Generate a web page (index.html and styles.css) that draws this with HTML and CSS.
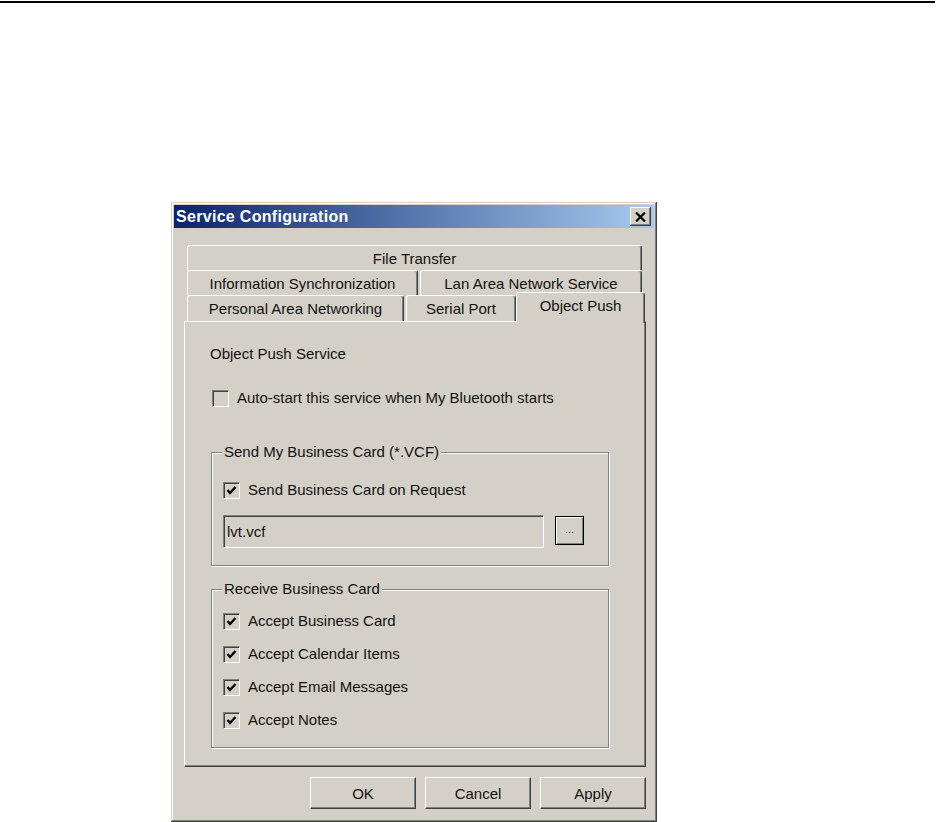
FILE: index.html
```html
<!DOCTYPE html>
<html lang="en">
<head>
  <meta charset="UTF-8" />
  <meta name="viewport" content="width=device-width, initial-scale=1" />
  <title>Service Configuration</title>
  <link rel="stylesheet" href="styles.css">
</head>
<body>
  <div class="topline"></div>

  <div class="dialog">
    <div class="titlebar">
      <span class="title">Service Configuration</span>
      <button class="close-btn" aria-label="Close">
        <svg width="11" height="10" viewBox="0 0 11 10"><path d="M1 0.5 L10 9.5 M10 0.5 L1 9.5" stroke="#000" stroke-width="2.2" fill="none"/></svg>
      </button>
    </div>

    <div class="tabs">
      <div class="tab-row">
        <div class="tab tab-ft">File Transfer</div>
      </div>
      <div class="tab-row">
        <div class="tab tab-is">Information Synchronization</div>
        <div class="tab tab-lan">Lan Area Network Service</div>
      </div>
      <div class="tab-row">
        <div class="tab tab-pan">Personal Area Networking</div>
        <div class="tab tab-sp">Serial Port</div>
        <div class="tab tab-op active">Object Push</div>
      </div>
    </div>

    <div class="panel">
      <p class="caption">Object Push Service</p>

      <div class="check top-check">
        <span class="box"></span>
        <span>Auto-start this service when My Bluetooth starts</span>
      </div>

      <fieldset class="group group-send">
        <legend>Send My Business Card (*.VCF)</legend>
        <div class="check">
          <span class="box"><svg width="15" height="15" viewBox="0 0 15 15"><path d="M3.5 7 L6 10 L11.5 4" stroke="#000" stroke-width="2.4" fill="none"/></svg></span>
          <span>Send Business Card on Request</span>
        </div>
        <div class="file-row">
          <div class="edit">lvt.vcf</div>
          <button class="browse">...</button>
        </div>
      </fieldset>

      <fieldset class="group group-recv">
        <legend>Receive Business Card</legend>
        <div class="check">
          <span class="box"><svg width="15" height="15" viewBox="0 0 15 15"><path d="M3.5 7 L6 10 L11.5 4" stroke="#000" stroke-width="2.4" fill="none"/></svg></span>
          <span>Accept Business Card</span>
        </div>
        <div class="check">
          <span class="box"><svg width="15" height="15" viewBox="0 0 15 15"><path d="M3.5 7 L6 10 L11.5 4" stroke="#000" stroke-width="2.4" fill="none"/></svg></span>
          <span>Accept Calendar Items</span>
        </div>
        <div class="check">
          <span class="box"><svg width="15" height="15" viewBox="0 0 15 15"><path d="M3.5 7 L6 10 L11.5 4" stroke="#000" stroke-width="2.4" fill="none"/></svg></span>
          <span>Accept Email Messages</span>
        </div>
        <div class="check">
          <span class="box"><svg width="15" height="15" viewBox="0 0 15 15"><path d="M3.5 7 L6 10 L11.5 4" stroke="#000" stroke-width="2.4" fill="none"/></svg></span>
          <span>Accept Notes</span>
        </div>
      </fieldset>
    </div>

    <div class="buttons">
      <button class="btn">OK</button>
      <button class="btn">Cancel</button>
      <button class="btn">Apply</button>
    </div>
  </div>
</body>
</html>
```

FILE: styles.css
```css
    body {
      margin: 0;
      background: #fff;
      font-family: "Liberation Sans", Arial, sans-serif;
      font-size: 15px;
      color: #111;
      overflow: hidden;
      height: 822px;
    }
    .topline {
      height: 2px;
      width: 935px;
      margin-top: 1px;
      background: #000;
    }
    .dialog {
      margin: 199px 0 0 171px;
      width: 486px;
      height: 620px;
      box-sizing: border-box;
      padding: 3px;
      background: #d4d0c8;
      box-shadow: inset -1px -1px #404040, inset 1px 1px #d4d0c8,
                  inset -2px -2px #808080, inset 2px 2px #fff;
    }
    .titlebar {
      height: 23px;
      display: flex;
      align-items: flex-start;
      justify-content: space-between;
      background: linear-gradient(to right, #0a246a, #a6caf0);
    }
    .title {
      color: #fff;
      font-weight: bold;
      font-size: 16px;
      letter-spacing: 0.3px;
      line-height: 23px;
      padding-left: 2px;
    }
    .close-btn {
      width: 21px;
      height: 19px;
      margin: 2px 3px 0 0;
      padding: 0;
      border: none;
      background: #d4d0c8;
      display: flex;
      align-items: center;
      justify-content: center;
      box-shadow: inset -1px -1px #404040, inset 1px 1px #fff,
                  inset -2px -2px #808080;
    }

    /* tabs */
    .tabs {
      margin: 17px 0 0 13px;
    }
    .tab-row {
      display: flex;
      align-items: flex-end;
      gap: 2px;
    }
    .tab {
      height: 25px;
      box-sizing: border-box;
      padding-top: 1px;
      line-height: 23px;
      text-align: center;
      white-space: nowrap;
      background: #d4d0c8;
      border-top: 1px solid #fff;
      border-left: 1px solid #fff;
      border-right: 1px solid #404040;
      border-radius: 3px 3px 0 0;
      box-shadow: inset -1px 0 #808080;
    }
    .tab-ft { width: 455px; }
    .tab-is { width: 231px; }
    .tab-lan { width: 222px; }
    .tab-pan { width: 217px; height: 26px; }
    .tab-sp { width: 110px; height: 26px; }
    .tab.active {
      width: 129px;
      height: 31px;
      margin: -3px 0 -2px -2px;
      position: relative;
      z-index: 2;
      line-height: 24px;
    }

    .panel {
      margin-left: 10px;
      width: 462px;
      height: 446px;
      box-sizing: border-box;
      padding: 23px 0 0 25px;
      border-top: 1px solid #fff;
      border-left: 1px solid #fff;
      border-right: 1px solid #404040;
      border-bottom: 1px solid #404040;
      box-shadow: inset -1px -1px #808080;
    }
    .caption {
      margin: 0;
      line-height: 18px;
    }
    .check {
      display: flex;
      align-items: center;
      gap: 8px;
      height: 18px;
      line-height: 18px;
    }
    .top-check {
      margin: 26px 0 0 2px;
    }
    .box {
      width: 17px;
      height: 17px;
      box-sizing: border-box;
      display: flex;
      align-items: center;
      justify-content: center;
      background: #d4d0c8;
      border-top: 1px solid #808080;
      border-left: 1px solid #808080;
      border-bottom: 1px solid #fff;
      border-right: 1px solid #fff;
      box-shadow: inset 1px 1px #404040;
    }

    .group {
      margin: 0 0 0 1px;
      width: 398px;
      box-sizing: border-box;
      padding: 0 0 0 11px;
      border: 1px solid #808080;
      box-shadow: inset 1px 1px #fff, 1px 1px #fff;
    }
    .group legend {
      margin-left: -1px;
      padding: 0 2px;
      line-height: 18px;
      background: #d4d0c8;
    }
    .group-send {
      margin-top: 36px;
      padding-top: 20px;
      padding-bottom: 17px;
    }
    .file-row {
      display: flex;
      align-items: flex-start;
      margin-top: 16px;
    }
    .edit {
      width: 321px;
      height: 33px;
      box-sizing: border-box;
      padding-left: 3px;
      line-height: 31px;
      background: #d4d0c8;
      border-top: 1px solid #808080;
      border-left: 1px solid #808080;
      border-bottom: 1px solid #fff;
      border-right: 1px solid #fff;
      box-shadow: inset 1px 1px #404040;
    }
    .browse {
      width: 29px;
      height: 29px;
      margin: 1px 0 0 11px;
      padding: 0 0 4px;
      font: 11px "Liberation Sans", Arial, sans-serif;
      background: #d4d0c8;
      border: 1px solid #000;
      box-shadow: inset 1px 1px #fff, inset -1px -1px #808080;
    }
    .group-recv {
      margin-top: 14px;
      padding-top: 14px;
      padding-bottom: 18px;
    }
    .group-recv .check + .check {
      margin-top: 15px;
    }

    .buttons {
      display: flex;
      justify-content: flex-end;
      gap: 9px;
      margin: 10px 8px 0 0;
    }
    .btn {
      width: 106px;
      height: 32px;
      font: 15px "Liberation Sans", Arial, sans-serif;
      color: #111;
      background: #d4d0c8;
      border-top: 1px solid #fff;
      border-left: 1px solid #fff;
      border-right: 1px solid #404040;
      border-bottom: 1px solid #404040;
      box-shadow: inset -1px -1px #808080;
    }
```
